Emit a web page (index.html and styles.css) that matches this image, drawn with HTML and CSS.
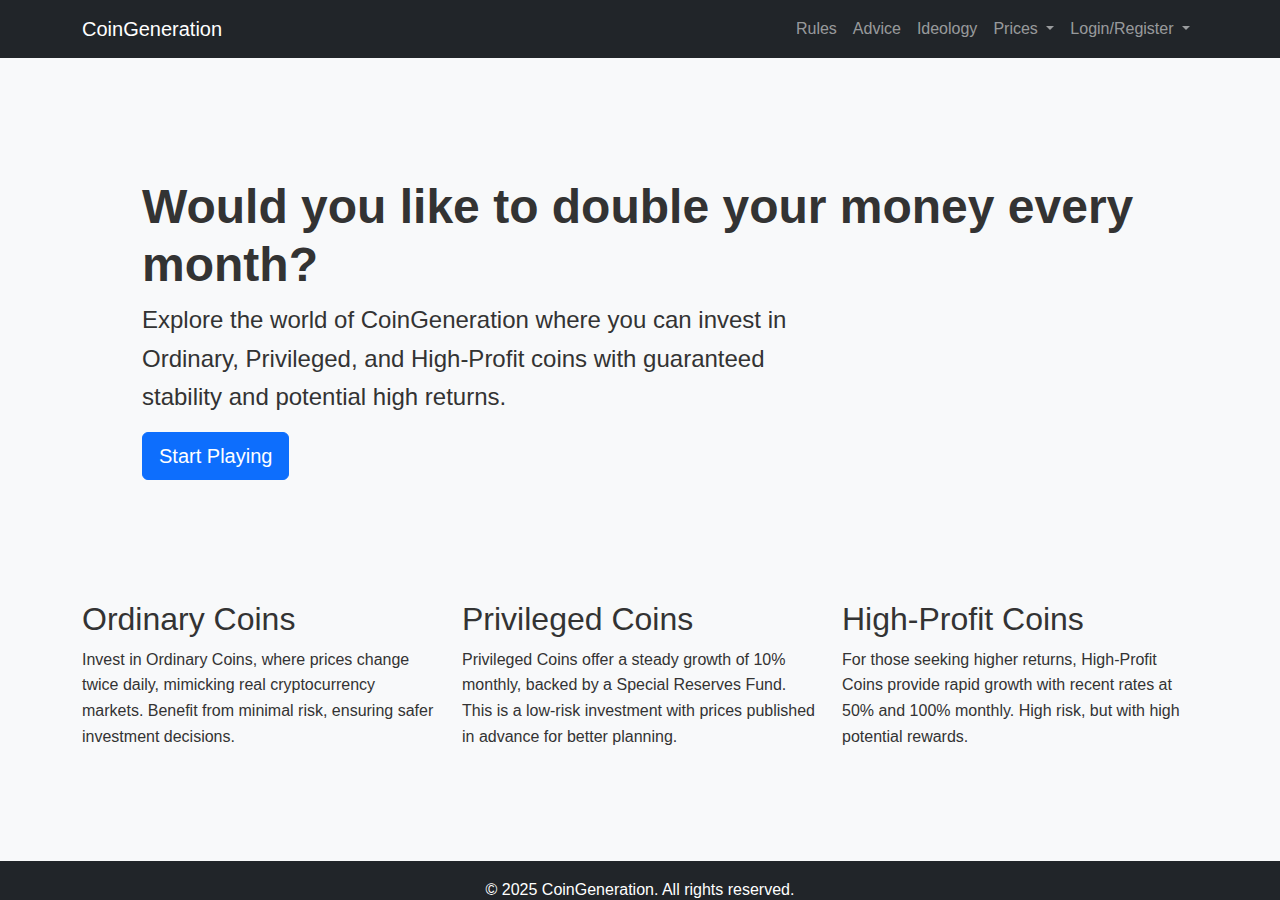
FILE: index.html
```html
<!DOCTYPE html>
<html lang="en">
<head>
    <meta charset="UTF-8">
    <meta name="viewport" content="width=device-width, initial-scale=1.0">
    <title>CoinGeneration</title>
    <link rel="stylesheet" href="styles.css">
</head>
<body>

<nav class="navbar">
    <div class="container navbar-inner">
        <a class="brand" href="#">CoinGeneration</a>
        <ul class="nav">
            <li><a class="nav-link" href="#">Rules</a></li>
            <li><a class="nav-link" href="#">Advice</a></li>
            <li><a class="nav-link" href="#">Ideology</a></li>
            <li><a class="nav-link dropdown" href="#">Prices</a></li>
            <li><a class="nav-link dropdown" href="#">Login/Register</a></li>
        </ul>
    </div>
</nav>

<div class="container">
    <div class="hero">
        <div class="hero-inner">
            <h1>Would you like to double your money every month?</h1>
            <p class="lead">Explore the world of CoinGeneration where you can invest in Ordinary, Privileged, and High-Profit coins with guaranteed stability and potential high returns.</p>
            <button class="btn">Start Playing</button>
        </div>
    </div>

    <div class="features">
        <div class="feature">
            <h2>Ordinary Coins</h2>
            <p>Invest in Ordinary Coins, where prices change twice daily, mimicking real cryptocurrency markets. Benefit from minimal risk, ensuring safer investment decisions.</p>
        </div>
        <div class="feature">
            <h2>Privileged Coins</h2>
            <p>Privileged Coins offer a steady growth of 10% monthly, backed by a Special Reserves Fund. This is a low-risk investment with prices published in advance for better planning.</p>
        </div>
        <div class="feature">
            <h2>High-Profit Coins</h2>
            <p>For those seeking higher returns, High-Profit Coins provide rapid growth with recent rates at 50% and 100% monthly. High risk, but with high potential rewards.</p>
        </div>
    </div>
</div>

<footer class="footer">
    <p>&copy; 2025 CoinGeneration. All rights reserved.</p>
</footer>

</body>
</html>
```

FILE: styles.css
```css
* {
    box-sizing: border-box;
}
body {
    margin: 0;
    font-family: "Liberation Sans", Arial, sans-serif;
    font-size: 16px;
    line-height: 1.6;
    color: #333;
    background-color: #f8f9fa;
}
.container {
    width: 1140px;
    margin: 0 auto;
    padding: 0 12px;
}
/* Navbar */
.navbar {
    background-color: #212529;
    padding: 8px 0;
}
.navbar-inner {
    display: flex;
    justify-content: space-between;
    align-items: center;
}
.brand {
    color: #fff;
    font-size: 20px;
    text-decoration: none;
    padding: 5px 0;
}
.nav {
    display: flex;
    list-style: none;
    margin: 0;
    padding: 0;
}
.nav-link {
    display: block;
    padding: 8px;
    color: rgba(255, 255, 255, 0.55);
    text-decoration: none;
}
.dropdown::after {
    content: "";
    display: inline-block;
    margin-left: 8.5px;
    vertical-align: 0.255em;
    border-top: 0.3em solid;
    border-right: 0.3em solid transparent;
    border-left: 0.3em solid transparent;
}
/* Hero */
.hero {
    margin: 24px 0;
    padding: 48px;
    background-color: #f8f9fa;
    border-radius: 8px;
}
.hero-inner {
    padding: 48px 12px;
}
h1 {
    margin: 0 0 8px;
    font-size: 48px;
    font-weight: bold;
    line-height: 1.2;
}
.lead {
    width: 664px;
    margin: 0 0 16px;
    font-size: 24px;
}
.btn {
    font-family: inherit;
    font-size: 20px;
    line-height: 1.5;
    padding: 8px 16px;
    color: #fff;
    background-color: #0d6efd;
    border: 1px solid #0d6efd;
    border-radius: 6px;
    cursor: pointer;
}
/* Features */
.features {
    display: grid;
    grid-template-columns: repeat(3, 1fr);
    gap: 24px;
    padding-bottom: 96px;
}
h2 {
    margin: 0 0 8px;
    font-size: 32px;
    font-weight: 500;
    line-height: 1.2;
}
.feature p {
    margin: 0 0 16px;
}
/* Footer */
.footer {
    background-color: #212529;
    color: #fff;
    text-align: center;
    padding: 16px 0;
}
.footer p {
    margin: 0;
}
```
